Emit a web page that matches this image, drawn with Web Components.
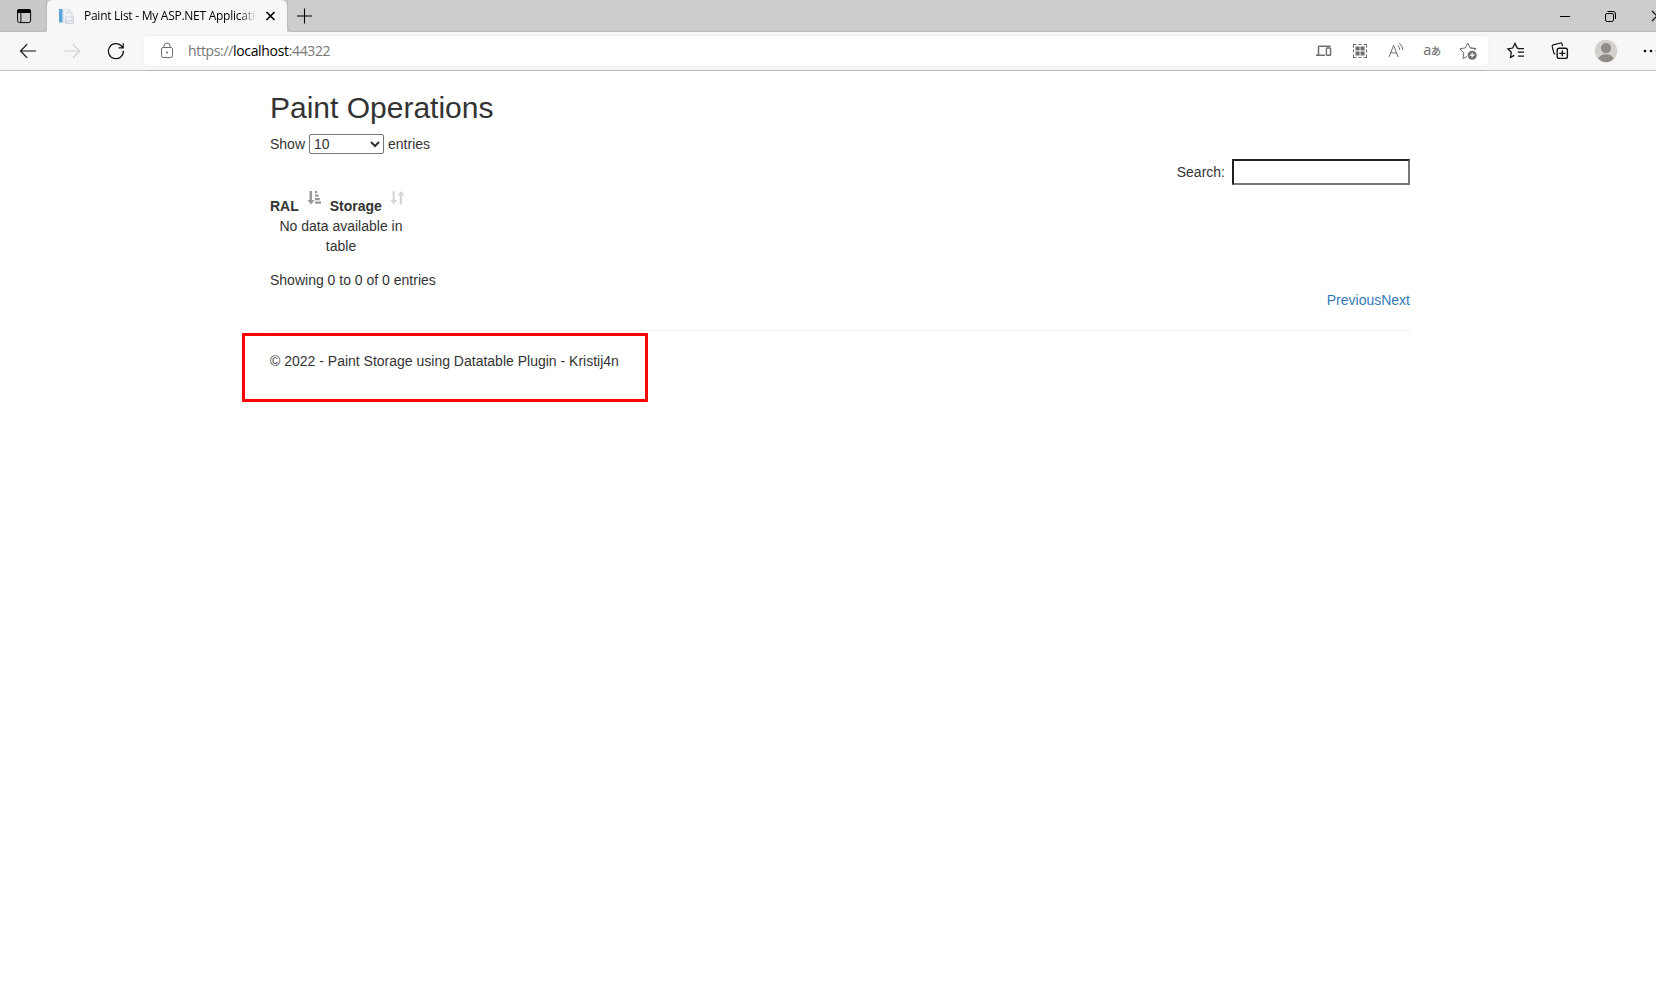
<!DOCTYPE html>
<html lang="en">
<head>
<meta charset="utf-8">
<title>Paint List - My ASP.NET Application</title>
<style>
html,body{margin:0;height:100%;overflow:hidden;background:#fff}
</style>
</head>
<body>
<browser-window>
  <browser-tabs slot="tabs">Paint List - My ASP.NET Application</browser-tabs>
  <browser-toolbar slot="toolbar"></browser-toolbar>
  <paint-page>
    <span slot="title">Paint Operations</span>
    <page-length></page-length>
    <table-search></table-search>
    <paint-table></paint-table>
    <table-pager></table-pager>
    <page-footer slot="footer">© 2022 - Paint Storage using Datatable Plugin - Kristij4n</page-footer>
  </paint-page>
</browser-window>
<script>
const define = (name, html) => customElements.define(name, class extends HTMLElement {
  constructor(){ super(); this.attachShadow({mode:'open'}).innerHTML = html; }
});

/* Every glyph is drawn on a 24px grid centred on 12,12. */
const glyphs = {
  panes:'<rect x="5.6" y="5.6" width="13" height="13" rx="2"/><path d="M5 8V7a2 2 0 0 1 2-2h10a2 2 0 0 1 2 2v2H5z" fill="currentColor" stroke="none"/><path d="M8.9 9v9.5"/>',
  page:'<rect x="4" y="5" width="3.5" height="13.5" fill="#5ba3d6" stroke="none"/><path d="M8.5 5.5h5.500l3 3v10.500h-8.500z" fill="#f1f3f6" stroke="#dce0e7"/><path d="M14 5v4h4M10.500 8.500h2.500M10.500 19v-6h8v6.500h-7v-3h7" stroke="#cdd4de"/>',
  close:'<path d="M8.500 8l8 8M16.500 8l-8 8" stroke-width="1.6"/>',
  plus:'<path d="M5 12h15M12.500 4.500v15" stroke-width="1.1"/>',
  back:'<path d="M20 12H4.8M11.2 5.2L4.5 12l6.7 6.8" stroke-width="1.2"/>',
  forward:'<path d="M4 12h15.2M12.8 5.2l6.7 6.8-6.7 6.8" stroke-width="1.2"/>',
  reload:'<path d="M19.4 11.8a7.5 7.5 0 1 1-2.2-5l1.7 1.8M19.2 4.3v4.5h-4.5" stroke-width="1.25"/>',
  lock:'<rect x="6.5" y="8.5" width="11" height="10" rx="1.6"/><path d="M9 8.5V7a3 3 0 0 1 6 0v1.5"/><circle cx="12" cy="13.5" r="1" fill="currentColor" stroke="none"/>',
  devices:'<path d="M6.500 15.5V8q0-.8.8-.8H18.500M4 16.2h9" stroke-width="1.5"/><rect x="14.4" y="9" width="4.2" height="7.3" rx=".8" stroke-width="1.4"/>',
  qr:'<path d="M5.5 8.500V5.5H8.500M15.500 5.5h3V8.500M18.5 15.500v3H15.500M8.500 18.5H5.500V15.500M10.500 5.5h3M10.500 18.5h3M5.5 10.500v3M18.5 10.500v3" stroke-width="1.1"/><path d="M7.5 7.500h4.100v4.100h-4.100zM12.500 7.500h4.100v4.100h-4.100zM7.500 12.500h4.100v4.100h-4.100zM12.500 12.500h4.100v4.100h-4.100z" fill="currentColor" stroke="none"/>',
  speak:'<path d="M5 18L9.600 6.3 14.2 18M6.600 13.9h6"/><path d="M14 6.6a7 7 0 0 1 1.9 4.4M15.5 4.3a10 10 0 0 1 3.4 6.7"/>',
  translate:'<text x="3.2" y="16" font-family="Open Sans,sans-serif" font-size="14.500" fill="currentColor" stroke="none">a</text><text x="11.1" y="16" font-family="Noto Sans CJK JP,sans-serif" font-size="10" fill="currentColor" stroke="currentColor" stroke-width=".2">あ</text>',
  staradd:'<path d="M19.200 10.500l.6-.9-5.600-.7-2.400-4.800-2.500 4.800-5.300.9 3.800 3.900-.8 5.800 4-2M14.200 8.900l5.600.7-1.600 1.700"/><circle cx="16.2" cy="16.2" r="4.5" fill="currentColor" stroke="none"/><path d="M13.8 16.2h4.8M16.2 13.8v4.8" stroke="#fff" stroke-width="1.2"/>',
  favorites:'<path d="M14.8 9.4l-1.6-.3L11 4.5 8.7 9l-4.8.8 3.4 3.4-.8 5.2 3.8-2M14 9.5h6M13.7 13.2H20M14 17h6" stroke-width="1.25"/>',
  collections:'<rect x="9.2" y="9.2" width="10.2" height="10.2" rx="2" stroke-width="1.35"/><path d="M14.3 11.3v6M11.3 14.3h6" stroke-width="1.35"/><path d="M7.3 15.4l-1.4-1.2-1.7-6.8q-.2-1.2 1-1.5L12.5 4q1.2-.2 1.5.9l.5 2.2" stroke-width="1.2"/>',
  avatar:'<circle cx="12" cy="12" r="11.2" fill="#d3d1ce" stroke="none"/><circle cx="12" cy="9.1" r="5.1" fill="#918b87" stroke="none"/><path d="M4.2 19.6Q6.7 15.2 12 15.2t7.8 4.4q-3.2 3.6-7.8 3.6t-7.8-3.6z" fill="#918b87" stroke="none"/>',
  more:'<g fill="currentColor" stroke="none"><circle cx="6" cy="12" r="1.35"/><circle cx="12" cy="12" r="1.35"/><circle cx="18" cy="12" r="1.35"/></g>',
  minimize:'<path d="M7 12.5h10"/>',
  restore:'<rect x="6.5" y="9.500" width="8" height="8" rx="1.6"/><path d="M8.5 7.5H14q2.500 0 2.500 2.500v5"/>',
  exit:'<path d="M7 7l10 10M17 7L7 17" stroke-width="1.1"/>',
  sortasc:'<path d="M6.500 5h2.5v9H11.500L8 18.500 4.500 14h2zM12 5h2.200v2.2h-2.200zM12 8.5H15.500v2.2h-3.500zM12 12h4.800v2.2h-4.800zM12 15.5h6v2.3h-6z" fill="currentColor" stroke="none"/>',
  sort:'<path d="M6.500 5h2.3v9H11.500L7.800 18.5 4.500 14h2zM13.700 18.5h2.4v-9H18.500L15 4.900 11.500 9.5h2.2z" fill="currentColor" stroke="none"/>'
};
customElements.define('ui-icon', class extends HTMLElement {
  constructor(){ super(); this.attachShadow({mode:'open'}); }
  connectedCallback(){
    this.shadowRoot.innerHTML = `<style>:host{display:block;flex:none;width:24px;height:24px}svg{display:block;overflow:visible}</style>
    <svg width="24" height="24" viewBox="0 0 24 24" fill="none" stroke="currentColor" stroke-width="1">${glyphs[this.getAttribute('name')]}</svg>`;
  }
});

define('browser-window', `<style>
:host{display:flex;flex-direction:column;width:1656px;height:987px;overflow:hidden;background:#fff}
</style><slot name="tabs"></slot><slot name="toolbar"></slot><slot></slot>`);

define('browser-tabs', `<style>
:host{display:flex;flex:none;height:32px;background:#cdcdcd;color:#000;font:12px "Open Sans",sans-serif;box-sizing:border-box}
.actions{width:47px;box-sizing:border-box;padding:4px 0 0 12px;background:#c9c9c9;border-radius:0 0 5px 0;box-shadow:inset -1px -1px 1px #bbb}
.tab{width:240px;box-sizing:border-box;display:flex;align-items:center;padding:0 5px 0 8px;background:#f7f7f7;border-radius:6px 6px 0 0}
.label{width:173px;margin:-1px 0 0 5px;overflow:hidden;white-space:nowrap;letter-spacing:-.26px;-webkit-mask-image:linear-gradient(90deg,#000 155px,transparent 173px);mask-image:linear-gradient(90deg,#000 155px,transparent 173px)}
.bar{flex:1;display:flex;justify-content:space-between;padding:4px 0 0 5px;box-shadow:inset 1px -1px 1px #bbb;border-radius:0 0 0 5px}
.controls{display:flex;gap:22px;margin-right:-13px}
</style>
<div class="actions"><ui-icon name="panes"></ui-icon></div>
<div class="tab"><ui-icon name="page"></ui-icon><span class="label"><slot></slot></span><ui-icon name="close" style="margin-left:1px"></ui-icon></div>
<div class="bar"><ui-icon name="plus"></ui-icon><div class="controls"><ui-icon name="minimize"></ui-icon><ui-icon name="restore"></ui-icon><ui-icon name="exit"></ui-icon></div></div>`);

define('browser-toolbar', `<style>
:host{display:flex;flex:none;align-items:center;height:39px;box-sizing:border-box;padding-left:16px;background:#f7f7f7;border-bottom:1px solid #bdbdbd;color:#111}
.nav{display:flex;flex:none;gap:20px;width:128px}
.nav ui-icon:nth-child(2){color:#cfcfcf}
.address{flex:none;width:1344px;height:30px;box-sizing:border-box;display:flex;align-items:center;padding:0 8px 0 10px;background:#fff;border-radius:4px;box-shadow:0 0 2px #e2e2e2;color:#6e6e6e}
.url{margin:-1px 0 0 9px;font:14px "Open Sans",sans-serif;letter-spacing:-.34px;color:#767676;white-space:nowrap}
b{font-weight:400;color:#000}
.tools{display:flex;gap:12px;margin-left:auto}
.side{display:flex;flex:none;margin-left:16px;gap:20px}
</style>
<div class="nav"><ui-icon name="back"></ui-icon><ui-icon name="forward"></ui-icon><ui-icon name="reload"></ui-icon></div>
<div class="address"><ui-icon name="lock" style="margin-left:1px"></ui-icon><span class="url">https://<b>localhost</b>:44322</span>
<div class="tools"><ui-icon name="devices"></ui-icon><ui-icon name="qr"></ui-icon><ui-icon name="speak"></ui-icon><ui-icon name="translate"></ui-icon><ui-icon name="staradd"></ui-icon></div></div>
<div class="side"><ui-icon name="favorites"></ui-icon><ui-icon name="collections"></ui-icon><ui-icon name="avatar" style="margin-left:2px"></ui-icon><ui-icon name="more" style="margin-left:1px"></ui-icon></div>`);

define('paint-page', `<style>
:host{display:block;width:1140px;margin:0 0 0 270px;padding:20px 0 0;font:14px/20px "Liberation Sans",Arial,sans-serif;color:#333}
h2{margin:0 0 10px;font-size:30px;line-height:33px;font-weight:400}
</style><h2><slot name="title"></slot></h2><slot></slot><slot name="footer"></slot>`);

define('page-length', `<style>
:host{display:flex;height:20px;gap:4px}
select{width:75px;height:20px;box-sizing:border-box;margin:0;padding:0;font:inherit;line-height:18px;color:#333;background:#fff;border:1px solid #767676;border-radius:2px}
</style><span>Show</span><select><option>10</option></select><span>entries</span>`);

define('table-search', `<style>
:host{display:flex;justify-content:flex-end;align-items:center;margin-top:5px;height:26px}
input{width:178px;height:26px;box-sizing:border-box;margin:0 0 0 7px;border:2px solid;border-color:#212121 #767676 #767676 #212121;background:#fff}
</style><span>Search:</span><input>`);

define('paint-table', `<style>
:host{display:block;width:142px;margin-top:4px}
.head{display:flex;height:27px;font-weight:700}
.head span{padding-top:7px}
.head ui-icon{margin-top:-3px}
.empty{text-align:center}
</style>
<div class="head"><span>RAL</span><ui-icon name="sortasc" style="color:#999;margin-left:4px"></ui-icon><span style="margin-left:3px">Storage</span><ui-icon name="sort" style="color:#d6d6d6;margin-left:4px"></ui-icon></div>
<div class="empty">No data available in<br>table</div>`);

define('table-pager', `<style>
:host{display:block;margin-top:14px}
nav{display:flex;justify-content:flex-end}
a{color:#337ab7}
</style><div>Showing 0 to 0 of 0 entries</div><nav><a>Previous</a><a>Next</a></nav>`);

define('page-footer', `<style>
:host{display:block;position:relative;margin-top:20px;padding-top:20px;border-top:1px solid #eee}
.mark{position:absolute;left:-28px;top:2px;width:406px;height:69px;box-sizing:border-box;border:3px solid #f00;border-radius:1px}
</style><slot></slot><div class="mark"></div>`);
</script>
</body>
</html>
